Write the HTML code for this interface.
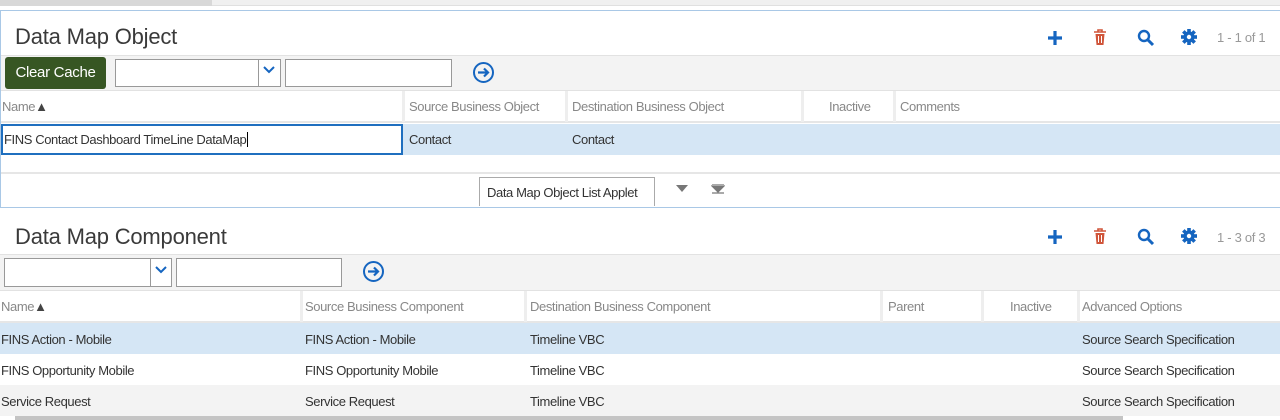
<!DOCTYPE html>
<html><head><meta charset="utf-8"><style>
*{box-sizing:border-box;margin:0;padding:0}
body{width:1280px;height:420px;overflow:hidden;background:#fff;font-family:"Liberation Sans",sans-serif;color:#333;position:relative}
.a{position:absolute}
.t{font-size:13px;letter-spacing:-0.4px;color:#333;white-space:nowrap}
.h{font-size:13px;letter-spacing:-0.4px;color:#888;white-space:nowrap}
.h b{color:#444;font-weight:normal}
.title{font-size:22px;color:#3a3a3a;letter-spacing:-0.2px}
.vl{position:absolute;width:3px;background:#eee}
.sel{border:1px solid #999;background:#fff}
.cnt{font-size:13px;color:#999;letter-spacing:-0.3px}
</style></head><body>
<div class="a" style="left:0;top:0;width:1280px;height:6px;background:#f0f0f0;border-bottom:1px solid #e0e0e0"></div>
<div class="a" style="left:0;top:0;width:212px;height:6px;background:#d8d8d8"></div>

<!-- panel 1 -->
<div class="a" style="left:0;top:10px;width:1280px;height:198px;border:1px solid #a9c8e6;border-right:none"></div>
<div class="a title" style="left:15px;top:24px">Data Map Object</div>
<div class="a" style="top:55px;left:1px;width:1279px;height:35px;background:#f3f3f3;border-top:1px solid #e2e2e2"></div>
<div class="a" style="left:5px;top:57px;width:101px;height:32px;background:#375623;border-radius:3px;color:#fff;font-size:15px;line-height:32px;text-align:center;letter-spacing:-0.3px">Clear Cache</div>
<div class="a sel" style="left:115px;top:59px;width:166px;height:28px"></div>
<div class="a" style="left:258px;top:59px;width:1px;height:28px;background:#999"></div>
<svg class="a" style="left:263px;top:66px" width="12" height="8"><path d="M1 1 L6 6 L11 1" stroke="#1565c0" stroke-width="2" fill="none"/></svg>
<div class="a sel" style="left:285px;top:59px;width:167px;height:28px"></div>
<svg class="a" style="left:472px;top:61px" width="23" height="23"><circle cx="11.5" cy="11.5" r="9.5" stroke="#1565c0" stroke-width="2" fill="none"/><path d="M6 11.5 H16 M12 7.5 L16 11.5 L12 15.5" stroke="#1565c0" stroke-width="2.2" fill="none"/></svg>
<div class="a" style="left:1px;top:90px;width:1279px;height:33px;background:#fff;border-top:1px solid #e2e2e2;border-bottom:2px solid #e6e6e6"></div>
<div class="a h" style="left:2px;top:99px">Name<b>&#9650;</b></div>
<div class="vl" style="left:402px;top:91px;height:31px"></div>
<div class="a h" style="left:409px;top:99px">Source Business Object</div>
<div class="vl" style="left:565px;top:91px;height:31px"></div>
<div class="a h" style="left:572px;top:99px">Destination Business Object</div>
<div class="vl" style="left:801px;top:91px;height:31px"></div>
<div class="a h" style="left:829px;top:99px">Inactive</div>
<div class="vl" style="left:893px;top:91px;height:31px"></div>
<div class="a h" style="left:900px;top:99px">Comments</div>
<div class="a" style="left:1px;top:124px;width:1279px;height:31px;background:#d5e6f5"></div>
<div class="a" style="left:1px;top:124px;width:402px;height:31px;background:#fff;border:2px solid #1f6fbf"></div>
<div class="a t" style="left:4px;top:132px">FINS Contact Dashboard TimeLine DataMap<span style="border-left:1px solid #000;margin-left:1px"></span></div>
<div class="a t" style="left:409px;top:132px">Contact</div>
<div class="a t" style="left:572px;top:132px">Contact</div>
<div class="a" style="left:1px;top:172px;width:1279px;height:2px;background:#e6e6e6"></div>
<div class="a" style="left:479px;top:177px;width:176px;height:29px;border:1px solid #aaa;border-bottom:none;background:#fff"></div>
<div class="a t" style="left:487px;top:185px">Data Map Object List Applet</div>
<svg class="a" style="left:675px;top:184px" width="14" height="10"><path d="M1 1 H13 L7 8Z" fill="#777"/></svg>
<svg class="a" style="left:711px;top:184px" width="14" height="10"><path d="M1 0 H13 M1 2 H13 L7 8Z M1 9 H13" stroke="#777" stroke-width="1.3" fill="#777"/></svg>

<!-- icons panel1 -->
<svg class="a" style="left:1046px;top:29px" width="18" height="18"><path d="M9 2 V16 M2 9 H16" stroke="#1565c0" stroke-width="3.2"/></svg>
<svg class="a" style="left:1093px;top:29px" width="14" height="17"><path d="M1 3 H13 M5 3 V1 H9 V3" stroke="#d0553a" stroke-width="1.6" fill="none"/><path d="M2.5 5 H11.5 L10.5 16 H3.5Z" fill="#d0553a"/><path d="M5.5 7 V14 M8.5 7 V14" stroke="#fff" stroke-width="1"/></svg>
<svg class="a" style="left:1137px;top:29px" width="18" height="18"><circle cx="7" cy="7" r="5" stroke="#1565c0" stroke-width="2.4" fill="none"/><path d="M10.5 10.5 L16 16" stroke="#1565c0" stroke-width="3"/></svg>
<svg class="a" style="left:1181px;top:29px" width="16" height="16"><g fill="#1565c0" transform="translate(8 8)"><circle r="5.5"/><rect x="-1.8" y="-8" width="3.6" height="16"/><rect x="-1.8" y="-8" width="3.6" height="16" transform="rotate(45)"/><rect x="-1.8" y="-8" width="3.6" height="16" transform="rotate(90)"/><rect x="-1.8" y="-8" width="3.6" height="16" transform="rotate(135)"/><circle r="2.2" fill="#fff"/></g></svg>
<div class="a cnt" style="left:1217px;top:30px">1 - 1 of 1</div>

<!-- panel 2 -->
<div class="a title" style="left:15px;top:224px">Data Map Component</div>
<svg class="a" style="left:1046px;top:228px" width="18" height="18"><path d="M9 2 V16 M2 9 H16" stroke="#1565c0" stroke-width="3.2"/></svg>
<svg class="a" style="left:1093px;top:228px" width="14" height="17"><path d="M1 3 H13 M5 3 V1 H9 V3" stroke="#d0553a" stroke-width="1.6" fill="none"/><path d="M2.5 5 H11.5 L10.5 16 H3.5Z" fill="#d0553a"/><path d="M5.5 7 V14 M8.5 7 V14" stroke="#fff" stroke-width="1"/></svg>
<svg class="a" style="left:1137px;top:228px" width="18" height="18"><circle cx="7" cy="7" r="5" stroke="#1565c0" stroke-width="2.4" fill="none"/><path d="M10.5 10.5 L16 16" stroke="#1565c0" stroke-width="3"/></svg>
<svg class="a" style="left:1181px;top:228px" width="16" height="16"><g fill="#1565c0" transform="translate(8 8)"><circle r="5.5"/><rect x="-1.8" y="-8" width="3.6" height="16"/><rect x="-1.8" y="-8" width="3.6" height="16" transform="rotate(45)"/><rect x="-1.8" y="-8" width="3.6" height="16" transform="rotate(90)"/><rect x="-1.8" y="-8" width="3.6" height="16" transform="rotate(135)"/><circle r="2.2" fill="#fff"/></g></svg>
<div class="a cnt" style="left:1217px;top:230px">1 - 3 of 3</div>
<div class="a" style="left:0;top:254px;width:1280px;height:36px;background:#f3f3f3;border-top:1px solid #e2e2e2"></div>
<div class="a sel" style="left:4px;top:258px;width:168px;height:29px"></div>
<div class="a" style="left:150px;top:258px;width:1px;height:29px;background:#999"></div>
<svg class="a" style="left:155px;top:266px" width="12" height="8"><path d="M1 1 L6 6 L11 1" stroke="#1565c0" stroke-width="2" fill="none"/></svg>
<div class="a sel" style="left:176px;top:258px;width:166px;height:29px"></div>
<svg class="a" style="left:362px;top:260px" width="23" height="23"><circle cx="11.5" cy="11.5" r="9.5" stroke="#1565c0" stroke-width="2" fill="none"/><path d="M6 11.5 H16 M12 7.5 L16 11.5 L12 15.5" stroke="#1565c0" stroke-width="2.2" fill="none"/></svg>
<div class="a" style="left:0;top:290px;width:1280px;height:33px;background:#fff;border-top:1px solid #e2e2e2;border-bottom:2px solid #e6e6e6"></div>
<div class="a h" style="left:1px;top:299px">Name<b>&#9650;</b></div>
<div class="vl" style="left:300px;top:291px;height:31px"></div>
<div class="a h" style="left:305px;top:299px">Source Business Component</div>
<div class="vl" style="left:524px;top:291px;height:31px"></div>
<div class="a h" style="left:530px;top:299px">Destination Business Component</div>
<div class="vl" style="left:880px;top:291px;height:31px"></div>
<div class="a h" style="left:888px;top:299px">Parent</div>
<div class="vl" style="left:981px;top:291px;height:31px"></div>
<div class="a h" style="left:1010px;top:299px">Inactive</div>
<div class="vl" style="left:1077px;top:291px;height:31px"></div>
<div class="a h" style="left:1082px;top:299px">Advanced Options</div>
<div class="a" style="left:0;top:323px;width:1280px;height:31px;background:#d5e6f5"></div>
<div class="a" style="left:0;top:385px;width:1280px;height:31px;background:#f3f3f3"></div>
<div class="a t" style="left:1px;top:332px">FINS Action - Mobile</div>
<div class="a t" style="left:305px;top:332px">FINS Action - Mobile</div>
<div class="a t" style="left:530px;top:332px">Timeline VBC</div>
<div class="a t" style="left:1082px;top:332px">Source Search Specification</div>
<div class="a t" style="left:1px;top:363px">FINS Opportunity Mobile</div>
<div class="a t" style="left:305px;top:363px">FINS Opportunity Mobile</div>
<div class="a t" style="left:530px;top:363px">Timeline VBC</div>
<div class="a t" style="left:1082px;top:363px">Source Search Specification</div>
<div class="a t" style="left:1px;top:394px">Service Request</div>
<div class="a t" style="left:305px;top:394px">Service Request</div>
<div class="a t" style="left:530px;top:394px">Timeline VBC</div>
<div class="a t" style="left:1082px;top:394px">Source Search Specification</div>
<div class="a" style="left:15px;top:416px;width:1108px;height:4px;background:#c4c4c4"></div>
</body></html>
